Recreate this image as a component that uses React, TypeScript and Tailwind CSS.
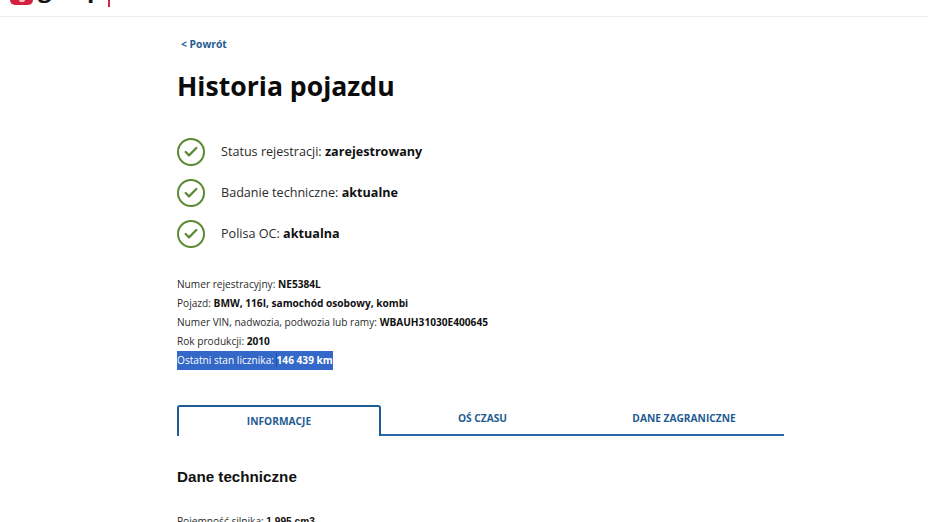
import { Check } from "lucide-react";

const statuses = [
  { label: "Status rejestracji:", value: "zarejestrowany" },
  { label: "Badanie techniczne:", value: "aktualne" },
  { label: "Polisa OC:", value: "aktualna" },
];

const details = [
  { label: "Numer rejestracyjny:", value: "NE5384L" },
  { label: "Pojazd:", value: "BMW, 116I, samochód osobowy, kombi" },
  { label: "Numer VIN, nadwozia, podwozia lub ramy:", value: "WBAUH31030E400645" },
  { label: "Rok produkcji:", value: "2010" },
];

function Header() {
  return (
    <header className="h-[17px] border-b border-[#eeeeee] overflow-hidden pl-[10px]">
      <div className="flex items-start h-[16px]">
        <div className="w-[23px] h-[5px] bg-[#d4213d] rounded-b-[6px] flex justify-center items-start">
          <div className="w-[6px] h-[2px] bg-[#f3c4cc] rounded-b-[2px]" />
        </div>
        <div className="w-[75px] h-[7px] relative overflow-hidden">
          <span className="absolute left-[5px] -top-[26px] text-[24px] leading-[28px] font-bold text-[#111111]">
            gov.pl
          </span>
        </div>
        <div className="w-[2px] h-[7px] bg-[#d4213d]" />
      </div>
    </header>
  );
}

export default function App() {
  return (
    <div className="w-[928px] h-[522px] overflow-hidden bg-white font-['Open_Sans',sans-serif] text-[#1b1b1b]">
      <Header />
      <main className="w-[607px] ml-[177px]">
        <a href="#" className="block mt-[19px] pl-[4px] text-[10.3px] leading-[16px] font-bold text-[#1f5c93]">
          &lt; Powrót
        </a>
        <h1 className="mt-[16px] text-[26.6px] leading-[36px] font-bold text-[#0b0b0b]">Historia pojazdu</h1>

        <ul className="mt-[34px] flex flex-col gap-[13px]">
          {statuses.map((s) => (
            <li key={s.label} className="flex items-center h-[28px] gap-[16px]">
              <span className="w-[28px] h-[28px] rounded-full border-2 border-[#5b8a32] flex items-center justify-center shrink-0">
                <Check className="w-[16px] h-[16px] text-[#5b8a32]" strokeWidth={3.4} />
              </span>
              <span className="text-[12.6px] text-[#2b2b2b]">
                {s.label} <b className="text-[#111111]">{s.value}</b>
              </span>
            </li>
          ))}
        </ul>

        <div className="mt-[27px] text-[10.15px] leading-[19px] text-[#2b2b2b]">
          {details.map((d) => (
            <p key={d.label}>
              {d.label} <b className="text-[#111111]">{d.value}</b>
            </p>
          ))}
          <p className="w-fit bg-[#3367c8] text-white">
            Ostatni stan licznika: <b className="-ml-[1px] border-l border-[#1f4fa8]">146 439 km</b>
          </p>
        </div>

        <nav className="mt-[35px] flex h-[31px] text-[10.2px] font-bold text-[#1f5c93]">
          <div className="w-[204px] border-2 border-b-0 border-[#1f5c93] rounded-t-[3px] flex items-center justify-center">
            INFORMACJE
          </div>
          <div className="w-[203px] border-b-2 border-[#2a66a8] flex items-center justify-center pb-[1px]">OŚ CZASU</div>
          <div className="w-[200px] border-b-2 border-[#2a66a8] flex items-center justify-center pb-[1px]">
            DANE ZAGRANICZNE
          </div>
        </nav>

        <h2 className="mt-[30px] text-[15.2px] leading-[22px] font-bold text-[#111111] font-['Liberation_Sans',sans-serif]">
          Dane techniczne
        </h2>
        <p className="mt-[24px] text-[10.15px] leading-[19px] text-[#2b2b2b]">
          Pojemność silnika: <b className="text-[#111111] font-['Liberation_Sans',sans-serif]">1 995 cm3</b>
        </p>
      </main>
    </div>
  );
}
